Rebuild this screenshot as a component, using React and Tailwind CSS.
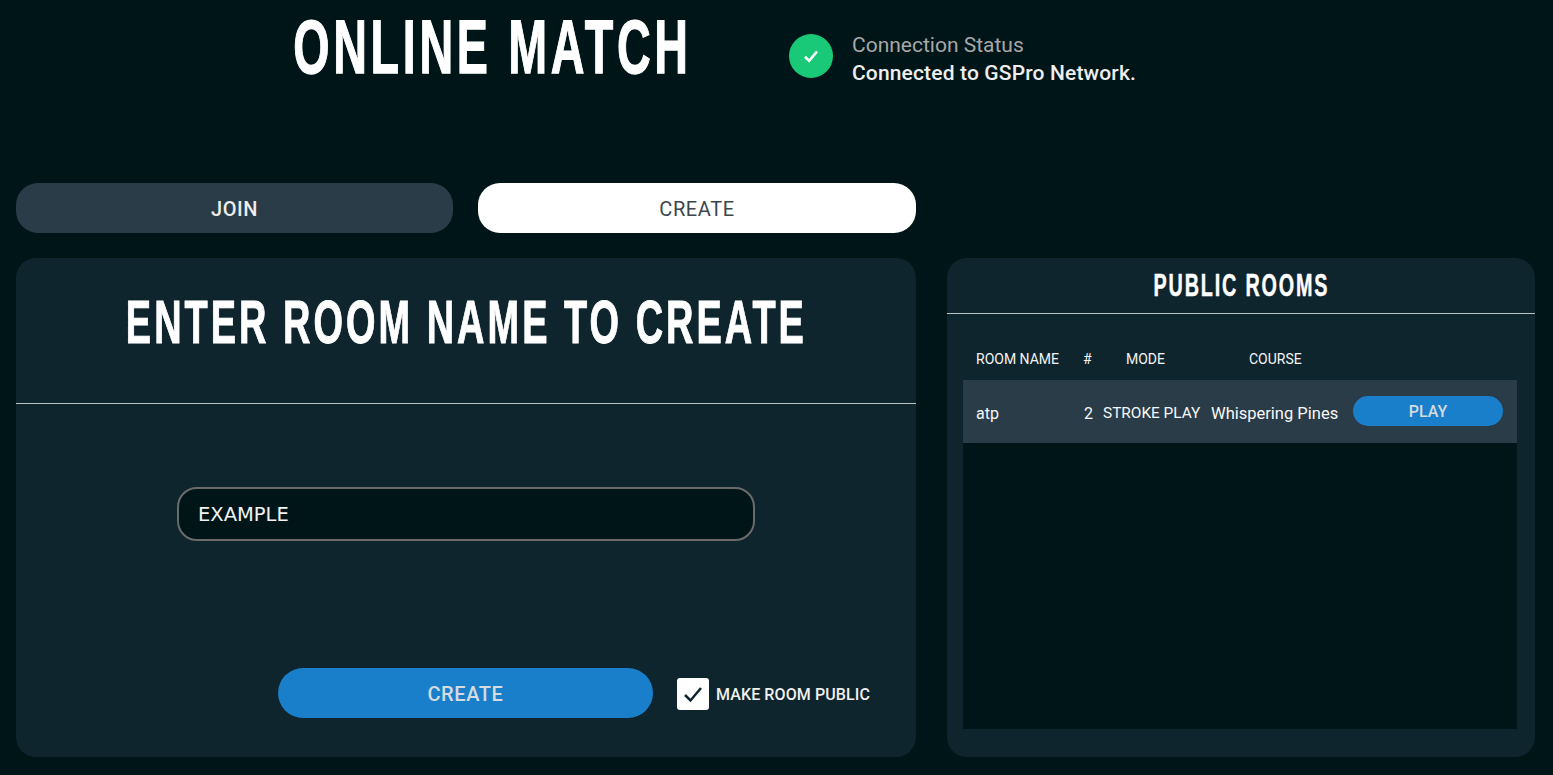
function Check({ className, strokeWidth = 3 }) {
  return (
    <svg viewBox="0 0 24 24" fill="none" stroke="currentColor" strokeWidth={strokeWidth} className={className}>
      <path d="M4 13l5.5 5.5L20 6" />
    </svg>
  );
}

export default function App() {
  return (
    <div className="w-[1553px] h-[775px] overflow-hidden bg-[#001518] text-white font-['Roboto',sans-serif] flex flex-col">
      <header className="h-[183px] flex items-start shrink-0">
        <h1 className="w-[985px] text-center whitespace-nowrap scale-x-[0.614] text-[76px] leading-[93px] font-bold tracking-[6px] font-['Liberation_Sans',sans-serif] [-webkit-text-stroke:1.25px_white]">
          ONLINE MATCH
        </h1>
        <div className="flex items-center gap-[19px] -ml-[196px] mt-[31px]">
          <div className="w-[44px] h-[44px] rounded-full bg-[#1ac977] flex items-center justify-center -mt-[7px]">
            <Check className="w-[18px] h-[18px] text-white" strokeWidth={3.5} />
          </div>
          <div className="flex flex-col">
            <span className="text-[21px] leading-[28px] text-[#a8a8a8]">Connection Status</span>
            <span className="text-[21px] leading-[28px] font-medium tracking-[0.15px] text-[#eeeeee]">Connected to GSPro Network.</span>
          </div>
        </div>
      </header>

      <div className="flex flex-1 pl-4 gap-[31px] pb-[18px]">
        <div className="w-[900px] flex flex-col gap-[25px]">
          <div className="flex gap-[25px] h-[50px]">
            <button className="w-[437px] pt-[2px] rounded-[22px] bg-[#2a3c48] text-[20px] font-medium text-[#eeeeee] tracking-[0.6px]">JOIN</button>
            <button className="w-[438px] pt-[2px] rounded-[22px] bg-white text-[20px] text-[#3a4650] tracking-[0.6px]">CREATE</button>
          </div>
          <section className="flex-1 rounded-[20px] bg-[#0f252e] flex flex-col">
            <div className="h-[146px] border-b border-[#b9c2c4] shrink-0 flex justify-center">
              <h2 className="whitespace-nowrap scale-x-[0.611] text-[62px] leading-[128px] font-bold tracking-[5px] font-['Liberation_Sans',sans-serif] [-webkit-text-stroke:1px_white]">ENTER ROOM NAME TO CREATE</h2>
            </div>
            <div className="flex justify-start pl-[161px] pt-[83px]">
              <div className="w-[578px] h-[54px] rounded-[20px] border-2 border-[#6a6a6a] bg-[#001518] flex items-center pl-[19px] pt-[2px] text-[19.5px] font-['DejaVu_Sans',sans-serif] text-[#f2f2f2]">
                EXAMPLE
              </div>
            </div>
            <div className="flex items-center pl-[262px] pt-[127px]">
              <button className="w-[375px] h-[50px] pt-[2px] rounded-[25px] bg-[#1a7fca] text-[20px] font-medium text-[#d5dbe0] tracking-[0.6px]">CREATE</button>
              <div className="w-[32px] h-[32px] ml-[24px] mt-[1px] rounded-[3px] bg-white flex items-center justify-center text-[#0f252e]">
                <Check className="w-[24px] h-[24px]" strokeWidth={2.5} />
              </div>
              <span className="ml-[7px] pt-[3px] text-[16px] font-medium tracking-[0.1px] text-[#f0f0f0]">MAKE ROOM PUBLIC</span>
            </div>
          </section>
        </div>

        <section className="w-[588px] mt-[75px] rounded-[20px] bg-[#0f252e] flex flex-col">
          <div className="h-[56px] border-b border-[#b9c2c4] flex justify-center shrink-0">
            <h2 className="whitespace-nowrap scale-x-[0.617] text-[32px] leading-[55px] font-bold tracking-[3px] font-['Liberation_Sans',sans-serif] [-webkit-text-stroke:0.5px_white]">PUBLIC ROOMS</h2>
          </div>
          <div className="h-[66px] flex items-end pb-[12px] text-[14px] leading-[18px] text-[#f4f4f4] shrink-0">
            <span className="ml-[29px] w-[107px]">ROOM NAME</span>
            <span className="w-[43px]">#</span>
            <span className="w-[123px]">MODE</span>
            <span>COURSE</span>
          </div>
          <div className="ml-4 mr-[18px] h-[349px] bg-[#001518]">
            <div className="h-[63px] bg-[#2a3c48] flex items-center text-[16px] text-[#f8f8f8]">
              <span className="ml-[13px] w-[108px] pt-[5px]">atp</span>
              <span className="w-[19px] pt-[5px]">2</span>
              <span className="w-[108px] pt-[5px] text-[15.4px]">STROKE PLAY</span>
              <span className="w-[142px] pt-[5px] text-[16.5px]">Whispering Pines</span>
              <button className="w-[150px] h-[30px] -mt-[1px] pt-[2px] rounded-[15px] bg-[#1a7fca] text-[16px] font-medium text-[#d5dbe0]">PLAY</button>
            </div>
          </div>
        </section>
      </div>
    </div>
  );
}
